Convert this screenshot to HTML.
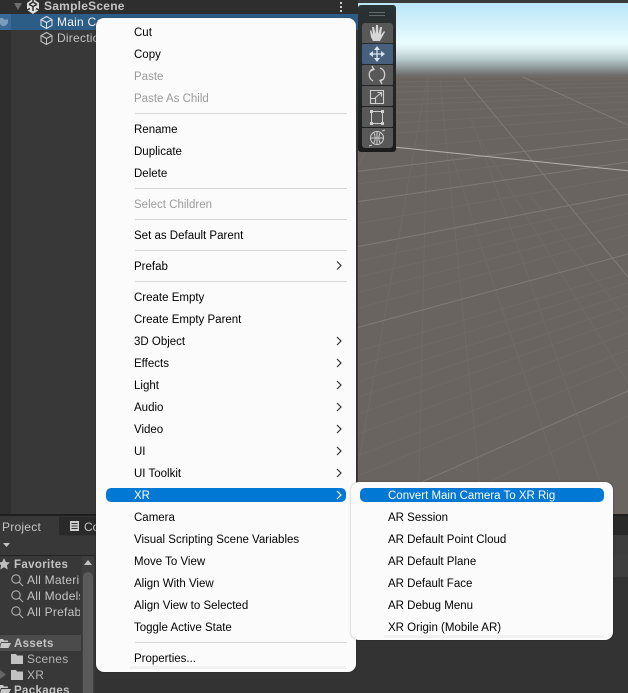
<!DOCTYPE html>
<html><head><meta charset="utf-8"><style>
html,body{margin:0;padding:0;width:628px;height:693px;overflow:hidden;background:#333}
body{position:relative;font-family:"Liberation Sans",sans-serif;font-size:11.5px}
div,span,svg{position:absolute}
.t{white-space:nowrap;line-height:16px;height:16px;font-size:12px}
.m{left:134px;color:#000;white-space:nowrap;line-height:16px;height:16px;margin-top:1px}
.s{left:388px;color:#000;white-space:nowrap;line-height:16px;height:16px;margin-top:1px}
.d{color:#9b9b9b}
.h{left:135px;width:212px;height:1px;background:#d6d6d6}
.dk{color:#c4c4c4}
.btn{left:362px;width:31px;height:20px;background:#585858;border-radius:1px}
</style></head><body>

<!-- scene -->
<div style="left:340px;top:0;width:288px;height:516px;background:#696460"></div>
<div style="left:340px;top:3px;width:288px;height:76px;background:linear-gradient(180deg,#bae6f6 0,#d6f3fb 25px,#ebfdfe 40px,#dcecee 47px,#b3c6c8 57px,#858c8c 67px,#706e6c 72px,#696460 76px)"></div>
<svg style="left:340px;top:0" width="288" height="516" viewBox="340 0 288 516" fill="none">
<g stroke="#6f6a66" stroke-width="1">
<path d="M356 82.400 628 79.500M356 87.700 628 83.100M356 92.900 628 86.700M356 101.300 628 92.400M356 106.500 628 96M356 114.900 628 101.800M356 125.400 628 109M356 135.900 628 116.200M356 151.600 628 127M356 184.100 628 149.300M356 223.900 628 176.700M356 261.600 628 202.600M356 277.400 628 213.400M356 293 628 224M356 308.800 628 235M356 351.800 628 272M356 366.400 628 283M356 382.200 628 294M356 397.900 628 306M356 414.600 628 318M356 434.600 628 333M356 456.600 628 350M356 476.500 628 364M356 545 628 416"/>
<path d="M396 100 340 196M427 78 356 477M428 78 419 481 418 516M440 78 479 477 483 516M450 150 489 270 572 516M470 116 526 270 612 516M480 140 559 270 628 383M530 195 589 270 628 320"/>
</g>
<g stroke="#7e7b77" stroke-width="1">
<path d="M356 171.500 628 139M356 201.900 628 162M356 247 628 194M356 328 628 254M356 511 628 391"/>
<path d="M464 78 628 277M523 77 628 125"/>
</g>
<path d="M396 147.300 628 170.700" stroke="#b5b2ae" stroke-width="1"/>
<path d="M340 0H628V3H340z" fill="#3a3a3a"/>
</svg>

<!-- hierarchy -->
<div style="left:0;top:0;width:358px;height:516px;background:#383838"></div>
<div style="left:0;top:0;width:11px;height:514px;background:#2f2f2f"></div>
<div style="left:0;top:0;width:358px;height:14px;background:#2e2e2e"></div>
<div style="left:0;top:14px;width:358px;height:16px;background:#2c5d87"></div>
<div style="left:0;top:14px;width:11px;height:16px;background:#3a6a96"></div>
<svg style="left:0;top:17px" width="9" height="11"><path d="M0 1H3L4 2.500H8V6L5 9H2L0 7z" fill="#7b9cba"/></svg>
<svg style="left:13px;top:2px" width="10" height="9"><path d="M1 1H9L5 8z" fill="#6e6e6e"/></svg>
<svg style="left:26px;top:-1px" width="14" height="15" viewBox="0 0 14 15"><path d="M7 0 13 4V11L7 15 1 11V4z" fill="#e0e0e0"/><path d="M7 0V3M7 3 3 5.500M7 3 11 5.500M7 7.500V12M7 7.500 3 5.500M7 7.500 11 5.500M1 11 4 9.500M13 11 10 9.500" stroke="#2e2e2e" stroke-width="1.500"/></svg>
<div class="t dk" style="left:44px;top:-2px;font-weight:bold;letter-spacing:.02em">SampleScene</div>
<svg style="left:339px;top:1px" width="5" height="12"><g fill="#ccc"><rect x="1" y="1" width="2" height="2"/><rect x="1" y="5" width="2" height="2"/><rect x="1" y="9" width="2" height="2"/></g></svg>
<svg style="left:39px;top:15px" width="15" height="15" viewBox="0 0 15 15" fill="none" stroke="#dfe6ec" stroke-width="1"><path d="M7.500 1.500 13 4.500V10.500L7.500 13.500 2 10.500V4.500zM2 4.500 7.500 7.500 13 4.500M7.500 7.500V13.500"/></svg>
<div class="t" style="left:57px;top:14px;color:#f0f0f0;letter-spacing:.02em">Main Camera</div>
<svg style="left:39px;top:31px" width="15" height="15" viewBox="0 0 15 15" fill="none" stroke="#c4c4c4" stroke-width="1"><path d="M7.500 1.500 13 4.500V10.500L7.500 13.500 2 10.500V4.500zM2 4.500 7.500 7.500 13 4.500M7.500 7.500V13.500"/></svg>
<div class="t dk" style="left:57px;top:30px;letter-spacing:.02em">Directional Light</div>

<!-- gizmo toolbar -->
<div style="left:358px;top:5px;width:38px;height:147px;background:linear-gradient(180deg,#2b3233,#1c1c1c);border-radius:3px"></div>
<div style="left:369px;top:12px;width:16px;height:1px;background:#626a6a"></div>
<div style="left:369px;top:15px;width:16px;height:1px;background:#626a6a"></div>
<div class="btn" style="top:23px;border-radius:3px 3px 0 0"></div>
<div class="btn" style="top:44px;background:#46607e"></div>
<div class="btn" style="top:65px"></div>
<div class="btn" style="top:86px"></div>
<div class="btn" style="top:107px"></div>
<div class="btn" style="top:128px;border-radius:0 0 3px 3px"></div>
<svg style="left:362px;top:23px" width="31" height="125" viewBox="0 0 31 125" fill="none">
<path d="M8 8 9 7 11 12 10 4 12 4 13.500 11 14 2 16 2 16.500 11 18 4 20 4 19 12 22 8 23 9 19 16 18 18H11L9 14z" fill="#d6d6d6"/>
<g stroke="#d8e2ec" stroke-width="1.300"><path d="M15 26V36M10 31H20"/></g>
<g fill="#d8e2ec"><path d="M15 23 18 27H12zM15 39 12 35H18zM7 31 11 28V34zM23 31 19 34V28z"/></g>
<g stroke="#cfcfcf" stroke-width="1.300"><path d="M11 58C6 55 6 48 11 46M18 45C24 47 24 55 19 58M10 43 12 46.500 8.500 48M20 61 18 57.500 22 56"/></g>
<g stroke="#cfcfcf" stroke-width="1.100"><path d="M8.500 67.500H21.500V80.500H8.500zM8.500 75.500H13.500V80.500M13 75 19 70M15.500 69.500H19.500V73.500"/></g>
<g stroke="#cfcfcf" stroke-width="1"><path d="M9.500 89V100M20.500 89V100M11 88.500H19M11 100.500H19"/></g>
<g fill="#cfcfcf"><rect x="8" y="87" width="3" height="3"/><rect x="19" y="87" width="3" height="3"/><rect x="8" y="99" width="3" height="3"/><rect x="19" y="99" width="3" height="3"/></g>
<g stroke="#cfcfcf" stroke-width="1"><circle cx="15" cy="115" r="6.500"/><path d="M15 109V121M9 115H21M12 110C13.500 113 13.500 117 12 120M18 110C16.500 113 16.500 117 18 120M23 107 20 108M7 123 10 122"/></g>
</svg>

<!-- bottom project panel -->
<div style="left:0;top:516px;width:628px;height:177px;background:#333"></div>
<div style="left:0;top:514px;width:628px;height:2px;background:#1f1f1f"></div>
<div style="left:0;top:516px;width:59px;height:20px;background:#383838"></div>
<div style="left:59px;top:517px;width:41px;height:18px;background:#2a2a2a"></div>
<div style="left:600px;top:516px;width:28px;height:19px;background:#292929"></div>
<div style="left:600px;top:535px;width:28px;height:20px;background:#3d3d3d"></div>
<div style="left:600px;top:555px;width:28px;height:22px;background:#3f3f3f"></div>
<div style="left:0;top:536px;width:96px;height:20px;background:#383838"></div>
<div style="left:0;top:555px;width:95px;height:138px;background:#383838"></div>
<div style="left:0;top:555px;width:95px;height:1px;background:#232323"></div>
<div class="t dk" style="left:2px;top:519px;letter-spacing:.02em">Project</div>
<svg style="left:69px;top:520px" width="11" height="12"><path d="M1 1H10V11H1z" fill="#cfcfcf"/><path d="M2.500 3.500H8.500M2.500 6H8.500M2.500 8.500H8.500" stroke="#333"/></svg>
<div class="t dk" style="left:84px;top:519px">Co</div>
<svg style="left:2px;top:542px" width="9" height="6"><path d="M1 1H8L4.500 5z" fill="#c4c4c4"/></svg>
<svg style="left:-2px;top:558px" width="12" height="12"><path d="M6 0 7.800 4 12 4.500 8.900 7.300 9.800 11.500 6 9.300 2.200 11.500 3.100 7.300 0 4.500 4.200 4z" fill="#bfbfbf"/></svg>
<div class="t dk" style="left:14px;top:557px;font-weight:bold;font-size:11.500px;letter-spacing:.03em">Favorites</div>
<svg style="left:10px;top:573px" width="15" height="48" fill="none" stroke="#b0b0b0" stroke-width="1.100"><circle cx="6" cy="6" r="4.200"/><path d="M9 9 13 13"/><circle cx="6" cy="22" r="4.200"/><path d="M9 25 13 29"/><circle cx="6" cy="38" r="4.200"/><path d="M9 41 13 45"/></svg>
<div class="t dk" style="left:27px;top:572px;width:53px;overflow:hidden;letter-spacing:.02em">All Materials</div>
<div class="t dk" style="left:27px;top:588px;width:53px;overflow:hidden;letter-spacing:.02em">All Models</div>
<div class="t dk" style="left:27px;top:604px;width:53px;overflow:hidden;letter-spacing:.02em">All Prefabs</div>
<div style="left:0;top:635px;width:81px;height:16px;background:#4b4b4b"></div>
<svg style="left:-2px;top:637px" width="13" height="12"><path d="M0 2H5L6 3.500H10V5H3L1 11H0zM3.500 6H13L10.500 11H2z" fill="#c8c8c8"/></svg>
<div class="t dk" style="left:14px;top:636px;font-weight:bold;font-size:11.500px;letter-spacing:.03em">Assets</div>
<svg style="left:11px;top:653px" width="12" height="36"><path d="M0 1H5L6 2.500H12V11H0zM0 17H5L6 18.500H12V27H0z" fill="#c2c2c2"/></svg>
<div class="t" style="left:27px;top:651px;color:#b4b4b4;letter-spacing:.02em">Scenes</div>
<svg style="left:0;top:669px" width="7" height="11"><path d="M0 1 6 5.500 0 10z" fill="#666"/></svg>
<div class="t" style="left:27px;top:667px;color:#b4b4b4;letter-spacing:.02em">XR</div>
<svg style="left:-2px;top:685px" width="13" height="8"><path d="M0 0H5L6 1.500H10V3H3L1 8H0zM3.500 4H13L11 8H2z" fill="#c8c8c8"/></svg>
<div class="t dk" style="left:14px;top:683px;font-weight:bold;font-size:11.500px;letter-spacing:.03em">Packages</div>
<div style="left:82px;top:556px;width:12px;height:137px;background:#3f3f3f"></div>
<svg style="left:84px;top:560px" width="8" height="6"><path d="M4 0 8 5H0z" fill="#c4c4c4"/></svg>
<div style="left:83px;top:572px;width:10px;height:121px;background:#5a5a5a;border-radius:5px 5px 0 0"></div>

<!-- main context menu -->
<div style="left:96px;top:18px;width:260px;height:654px;background:#fbfbfb;border-radius:8px;box-shadow:0 0 2px rgba(0,0,0,.3)"></div>
<div style="left:106px;top:488px;width:240px;height:14px;background:#0078d4;border-radius:5px"></div>
<div style="left:130px;top:666px;width:216px;height:3px;background:#f1f1f1"></div>

<div class="m" style="top:24px">Cut</div>
<div class="m" style="top:46px">Copy</div>
<div class="m d" style="top:68px">Paste</div>
<div class="m d" style="top:90px">Paste As Child</div>
<div class="h" style="top:113px"></div>
<div class="m" style="top:121px">Rename</div>
<div class="m" style="top:143px">Duplicate</div>
<div class="m" style="top:165px">Delete</div>
<div class="h" style="top:188px"></div>
<div class="m d" style="top:196px">Select Children</div>
<div class="h" style="top:219px"></div>
<div class="m" style="top:227px">Set as Default Parent</div>
<div class="h" style="top:250px"></div>
<div class="m" style="top:258px">Prefab</div>
<div class="h" style="top:281px"></div>
<div class="m" style="top:289px">Create Empty</div>
<div class="m" style="top:311px">Create Empty Parent</div>
<div class="m" style="top:333px">3D Object</div>
<div class="m" style="top:355px">Effects</div>
<div class="m" style="top:377px">Light</div>
<div class="m" style="top:399px">Audio</div>
<div class="m" style="top:421px">Video</div>
<div class="m" style="top:443px">UI</div>
<div class="m" style="top:465px">UI Toolkit</div>
<div class="m" style="top:487px;color:#fff">XR</div>
<div class="m" style="top:509px">Camera</div>
<div class="m" style="top:531px">Visual Scripting Scene Variables</div>
<div class="m" style="top:553px">Move To View</div>
<div class="m" style="top:575px">Align With View</div>
<div class="m" style="top:597px">Align View to Selected</div>
<div class="m" style="top:619px">Toggle Active State</div>
<div class="h" style="top:642px"></div>
<div class="m" style="top:650px">Properties...</div>

<svg style="left:335px;top:260px" width="8" height="240" fill="none" stroke="#333" stroke-width="1.200"><path d="M2 1.500 6 5.500 2 9.500M2 77 6 81 2 85M2 99 6 103 2 107M2 121 6 125 2 129M2 143 6 147 2 151M2 165 6 169 2 173M2 187 6 191 2 195M2 209 6 213 2 217"/><path d="M2 231 6 235 2 239" stroke="#fff"/></svg>

<!-- sub menu -->
<div style="left:351px;top:482px;width:262px;height:158px;background:#fbfbfb;border-radius:8px;box-shadow:0 0 2px rgba(0,0,0,.3)"></div>
<div style="left:360px;top:488px;width:244px;height:14px;background:#0078d4;border-radius:5px"></div>
<div style="left:384px;top:635px;width:220px;height:3px;background:#f1f1f1"></div>
<div class="s" style="top:487px;color:#fff">Convert Main Camera To XR Rig</div>
<div class="s" style="top:509px">AR Session</div>
<div class="s" style="top:531px">AR Default Point Cloud</div>
<div class="s" style="top:553px">AR Default Plane</div>
<div class="s" style="top:575px">AR Default Face</div>
<div class="s" style="top:597px">AR Debug Menu</div>
<div class="s" style="top:619px">XR Origin (Mobile AR)</div>
</body></html>
